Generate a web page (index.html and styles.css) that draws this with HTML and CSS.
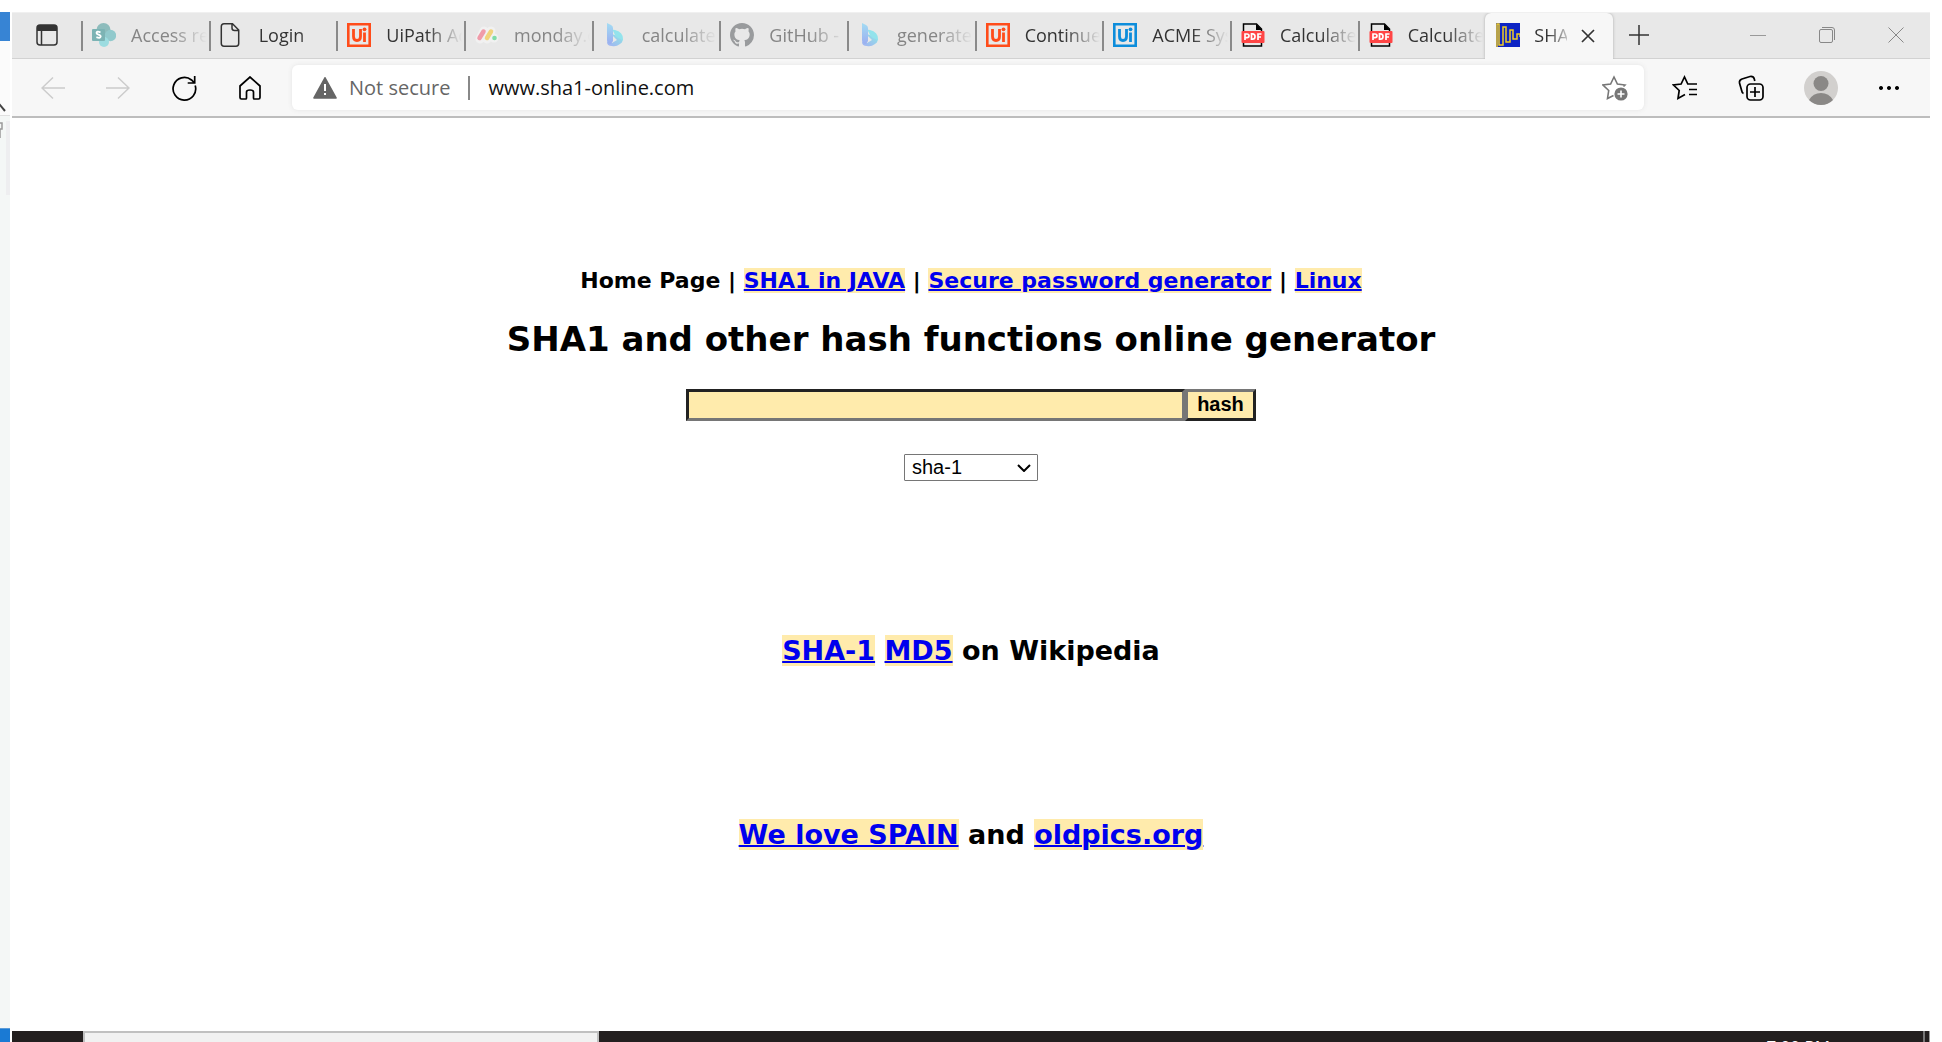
FILE: index.html
```html
<!DOCTYPE html>
<html lang="en">
<head>
<meta charset="utf-8">
<title>SHA1 and other hash functions online generator</title>
<link rel="stylesheet" href="styles.css">
</head>
<body>
<svg class="defs" aria-hidden="true">
  <symbol id="bing" viewBox="0 0 24 24">
    <defs><linearGradient id="bg1" x1="0" y1="0" x2="0" y2="1"><stop offset="0" stop-color="#a3dcf3"/><stop offset="1" stop-color="#9aaef0"/></linearGradient>
    <linearGradient id="bg2" x1="1" y1="0" x2="0" y2="1"><stop offset="0" stop-color="#8fe6e6"/><stop offset="1" stop-color="#a3b0f2"/></linearGradient></defs>
    <path d="M9 12q1-1 3 0l5 2q5 4 0 7-4 3-8 2-5 0-5-4l5 1 5-3z" fill="url(#bg2)"/>
    <path d="M10 8q-1-2 2-1 8 2 8 9v2q-1-2-5-3-2-1-3-3z" fill="#93e3ec"/>
    <path d="M4 0l4 2q2 1 2 3v13l-2 3q-4 0-4-4z" fill="url(#bg1)"/>
  </symbol>
  <symbol id="uipath" viewBox="0 0 24 24">
    <path d="M1.300 1.300h21.400v21.400H1.300z" fill="none" stroke="currentColor" stroke-width="2.600"/>
    <path d="M6.500 6v7.500q0 4 3.500 4t3.500-4V6M17.500 9.500V19" fill="none" stroke="currentColor" stroke-width="2.800"/>
    <circle cx="17.500" cy="6.300" r="1.900" fill="currentColor"/>
  </symbol>
  <symbol id="pdf" viewBox="0 0 24 24">
    <path d="M2.500 8V1h13l5 5v2M2.500 20v3h18v-3" fill="#e8e8e8" stroke="#000" stroke-width="1.500"/>
    <path d="M15 1l6 6h-6z" fill="#000"/>
    <rect x=".5" y="8" width="23" height="12" rx="1" fill="#ff4545"/>
    <path d="M4 17v-6h2q2 0 2 1.800t-2 1.800H4M10.500 10.800v5.400h1q2.500 0 2.500-2.700t-2.500-2.700zM17 17v-6h3.500M17 14h3" fill="none" stroke="#fff" stroke-width="1.700"/>
  </symbol>
</svg>
<div class="desktop">
  <aside class="behind" aria-hidden="true">
    <div class="behind-title"></div>
    <div class="behind-tools"><svg width="10" height="75" viewBox="0 0 10 75"><path d="M-4 69L0 64l5 6" fill="none" stroke="#444" stroke-width="2"/></svg></div>
    <div class="behind-page"><svg width="10" height="80" viewBox="0 0 10 80"><path d="M6 5h4v74H6z" fill="#eeeef0"/><path d="M-3 7h5v6H0v9" fill="none" stroke="#999" stroke-width="1.500"/></svg></div>
    <div class="behind-task"></div>
  </aside>
  <div class="window">
    <header class="tabstrip">
      <button class="tab-menu" aria-label="Tab actions menu"><svg width="22" height="22" viewBox="0 0 22 22"><rect x="1" y="1" width="20" height="20" rx="3" fill="none" stroke="#333" stroke-width="1.500"/><path d="M1 7V4q0-3 3-3h14q3 0 3 3v3z" fill="#333"/><path d="M5.500 7v14" stroke="#333" stroke-width="1.500"/></svg></button>
      <nav class="tabs" aria-label="Tabs">
        <div class="tab dim"><svg class="fav" viewBox="0 0 24 24"><circle cx="11.500" cy="7" r="7" fill="#8dbcbc"/><circle cx="18.500" cy="12.500" r="5.700" fill="#91c9cc"/><circle cx="12" cy="19" r="5" fill="#9cdce0"/><rect y="6" width="13" height="12" rx="1" fill="#7cb3b4"/><path d="M8.500 9.300q-4-1.500-4 .8 0 1 2 1.500 2.300.6 2.200 2-.4 2-4.300.6" fill="none" stroke="#fff" stroke-width="1.800"/></svg><span>Access re</span></div>
        <div class="tab"><svg class="fav" viewBox="0 0 24 24"><path d="M4 .8h8.500l6.200 6.200v13.500q0 2.700-2.700 2.700H4q-2.700 0-2.700-2.700v-17Q1.300.8 4 .8zM12 1v4q0 2.500 2.500 2.500h4" fill="none" stroke="#333" stroke-width="1.500"/></svg><span>Login</span></div>
        <div class="tab"><svg class="fav orange"><use href="#uipath"/></svg><span>UiPath Ac</span></div>
        <div class="tab dim"><svg class="fav" viewBox="0 0 24 24"><path d="M5 16l4-8M12 16l4-8M19 15v0" stroke="#f1f1f1" stroke-width="9" stroke-linecap="round"/><path d="M4.500 15l4-6.500" stroke="#f09ba9" stroke-width="4.500" stroke-linecap="round"/><path d="M12 15l4-6.500" stroke="#f1d37c" stroke-width="4.500" stroke-linecap="round"/><circle cx="19.500" cy="15" r="2.300" fill="#80dca7"/></svg><span>monday.c</span></div>
        <div class="tab dim"><svg class="fav"><use href="#bing"/></svg><span>calculate</span></div>
        <div class="tab dim"><svg class="fav" viewBox="0 0 16 16"><path fill="#999b9d" d="M8 0C3.580 0 0 3.580 0 8c0 3.540 2.290 6.530 5.470 7.590.4.070.55-.17.55-.38 0-.19-.01-.82-.01-1.490-2.010.37-2.530-.49-2.690-.94-.09-.23-.48-.94-.82-1.130-.28-.15-.68-.52-.01-.53.63-.01 1.080.58 1.230.82.72 1.210 1.870.87 2.330.66.07-.52.28-.87.51-1.070-1.780-.2-3.640-.89-3.640-3.950 0-.87.31-1.590.82-2.150-.08-.2-.36-1.020.08-2.120 0 0 .67-.21 2.200.82a7.600 7.600 0 0 1 4 0c1.530-1.040 2.200-.82 2.200-.82.44 1.100.16 1.920.08 2.120.51.56.82 1.270.82 2.150 0 3.070-1.870 3.750-3.650 3.950.29.25.54.73.54 1.480 0 1.070-.01 1.930-.01 2.200 0 .21.15.46.55.38A8.010 8.010 0 0 0 16 8c0-4.420-3.580-8-8-8z"/></svg><span>GitHub -</span></div>
        <div class="tab dim"><svg class="fav"><use href="#bing"/></svg><span>generate</span></div>
        <div class="tab"><svg class="fav orange"><use href="#uipath"/></svg><span>Continue</span></div>
        <div class="tab"><svg class="fav blue"><use href="#uipath"/></svg><span>ACME Sys</span></div>
        <div class="tab"><svg class="fav"><use href="#pdf"/></svg><span>Calculate</span></div>
        <div class="tab"><svg class="fav"><use href="#pdf"/></svg><span>Calculate</span></div>
        <div class="tab active"><svg class="fav" viewBox="0 0 24 24"><path fill="#0d24c4" d="M0 0h24v24H0z"/><path d="M1 24V1h2v21h4V4h3v15h4V7h3v9h4v-5h3v3" fill="none" stroke="#f1cd24" stroke-width="1.500"/></svg><span>SHA</span><button class="close" aria-label="Close tab"><svg width="14" height="14" viewBox="0 0 14 14"><path d="M1 1l12 12M13 1L1 13" stroke="#333" stroke-width="1.700"/></svg></button></div>
      </nav>
      <div class="strip-end">
        <button aria-label="New tab"><svg width="22" height="22" viewBox="0 0 22 22"><path d="M11 1v20M1 11h20" stroke="#333" stroke-width="1.500"/></svg></button>
        <div class="win-buttons">
          <button aria-label="Minimize"><svg width="16" height="16" viewBox="0 0 16 16"><path d="M0 8.500h16" stroke="#999"/></svg></button>
          <button aria-label="Restore"><svg width="16" height="16" viewBox="0 0 16 16"><rect x=".5" y="2.500" width="13" height="13" rx="1.500" fill="none" stroke="#888"/><path d="M3 .5h10q2.500 0 2.500 2.500v10" fill="none" stroke="#888"/></svg></button>
          <button aria-label="Close"><svg width="16" height="16" viewBox="0 0 16 16"><path d="M.5.5l15 15M15.500.5l-15 15" stroke="#888"/></svg></button>
        </div>
      </div>
    </header>
    <div class="toolbar">
      <div class="nav-buttons">
        <button aria-label="Back"><svg width="24" height="24" viewBox="0 0 24 24"><path d="M12 1.500L1 12l11 10.500M1 12h23" fill="none" stroke="#ccc" stroke-width="1.500"/></svg></button>
        <button aria-label="Forward"><svg width="24" height="24" viewBox="0 0 24 24"><path d="M12 1.500L23 12 12 22.500M0 12h23" fill="none" stroke="#ccc" stroke-width="1.500"/></svg></button>
        <button aria-label="Refresh"><svg width="26" height="26" viewBox="0 0 26 26"><path d="M24.200 10.500A11.300 11.300 0 1 1 20.500 5l3 2.800M23.700 1v7h-7" fill="none" stroke="#000" stroke-width="1.700"/></svg></button>
        <button aria-label="Home"><svg width="24" height="24" viewBox="0 0 24 24"><path d="M2 10L12 1l10 9v11.500q0 1.500-1.500 1.500h-4.200q-.8 0-.8-1v-6q0-2-3.500-2t-3.500 2v6q0 1-.8 1H3.500Q2 23 2 21.500z" fill="none" stroke="#000" stroke-width="1.700"/></svg></button>
      </div>
      <div class="address">
        <svg width="24" height="22" viewBox="0 0 24 22"><path d="M12 .8L23 21H1z" fill="#666" stroke="#666" stroke-width="1.600" stroke-linejoin="round"/><path d="M12 7v7M12 16v2" stroke="#fff" stroke-width="2"/></svg>
        <span class="secure">Not secure</span>
        <input class="url" type="text" aria-label="Address" value="www.sha1-online.com">
        <button aria-label="Add to favorites"><svg width="26" height="26" viewBox="0 0 26 26"><path d="M11.500 20.500L5.500 23.500l1.200-8L1 10l7.600-1L12 2l3.400 7 7.600 1-1.500 1.500" fill="none" stroke="#767676" stroke-width="1.600"/><circle cx="19" cy="19" r="6.600" fill="#767676"/><path d="M19 15.500v7M15.500 19h7" stroke="#fff" stroke-width="1.600"/></svg></button>
      </div>
      <div class="tools">
        <button aria-label="Favorites"><svg width="26" height="26" viewBox="0 0 26 26"><path d="M13 19.500L6 23.500l1.200-8L1.500 10l7.600-1L12.500 2l3.300 7H25M17 14.500h8M17 19.500h8" fill="none" stroke="#000" stroke-width="1.700"/></svg></button>
        <button aria-label="Collections"><svg width="26" height="26" viewBox="0 0 26 26"><rect x="9" y="9" width="16" height="16" rx="3.500" fill="none" stroke="#000" stroke-width="1.700"/><path d="M17 12v10M12 17h10M5.500 18.500Q4 18 3.500 15L1.500 8Q1 5 4 4l8-2.500q3.500-.5 4.300 2.500l.5 2" fill="none" stroke="#000" stroke-width="1.700"/></svg></button>
        <button aria-label="Profile"><svg width="34" height="34" viewBox="0 0 34 34"><circle cx="17" cy="17" r="17" fill="#d2d0ce"/><circle cx="17" cy="12.500" r="7.500" fill="#8a8886"/><path d="M5 29q4-7 12-7t12 7q-5 5-12 5T5 29z" fill="#8a8886"/></svg></button>
        <button aria-label="Settings and more"><svg width="22" height="6" viewBox="0 0 22 6"><path d="M3 1a2 2 0 1 0 .01 0zM11 1a2 2 0 1 0 .01 0zM19 1a2 2 0 1 0 .01 0z"/></svg></button>
      </div>
    </div>
    <main class="page">
      <p class="links">Home Page | <a href="#java">SHA1 in JAVA</a> | <a href="#password">Secure password generator</a> | <a href="#linux">Linux</a></p>
      <h1>SHA1 and other hash functions online generator</h1>
      <form>
        <div class="entry"><input type="text" aria-label="Text to hash"><button type="button">hash</button></div>
        <div class="pick"><select aria-label="Hash function"><option>sha-1</option><option>md5</option></select><svg width="14" height="8" viewBox="0 0 14 8"><path d="M1 1l6 6 6-6" fill="none" stroke="#000" stroke-width="2"/></svg></div>
      </form>
      <p class="wiki"><a href="#sha1">SHA-1</a> <a href="#md5">MD5</a> on Wikipedia</p>
      <p class="love"><a href="#spain">We love SPAIN</a> and <a href="#oldpics">oldpics.org</a></p>
    </main>
    <footer class="taskbar"><div class="search"></div><time>7:00 PM</time><div class="peek"></div></footer>
  </div>
</div>
</body>
</html>
```
FILE: styles.css
```css
* { box-sizing: border-box; }
body { margin: 0; background: #fff; font-family: "Open Sans", "Noto Sans", sans-serif; }
button { border: 0; padding: 0; background: none; display: flex; align-items: center; justify-content: center; }
svg { display: block; flex: none; }
.defs { position: absolute; width: 0; height: 0; }

.desktop { display: flex; gap: 2px; height: 100vh; padding: 12px 12px 0 0; overflow: hidden; }
.behind { width: 10px; display: flex; flex-direction: column; overflow: hidden; }
.behind-title { height: 29px; background: #3784d4; }
.behind-tools { height: 75px; background: #fbfbfb; border-bottom: 1px solid #e0e0e0; }
.behind-page { flex: 1; background: #f4f7f6; }
.behind-task { height: 14px; background: #1a7ad4; border-top: 1px solid #5a9bd8; }
.window { flex: 1; min-width: 0; display: flex; flex-direction: column; }

/* Tab strip */
.tabstrip { display: flex; height: 47px; background: #e8e8e8; border-top: 1px solid #f0f0f0; border-bottom: 1px solid #d2d2d2; }
.tab-menu { width: 69px; padding-bottom: 2px; }
.tabs { flex: 1; min-width: 0; display: grid; grid-template-columns: repeat(12, minmax(0, 1fr)); }
.tab { display: flex; align-items: center; height: 46px; gap: 15px; padding: 0 2px 2px 11px; font-size: 18px; color: #333; background: linear-gradient(#8a8a8a, #8a8a8a) 0 8px / 2px 30px no-repeat; }
.tab span { flex: 1; min-width: 0; overflow: hidden; white-space: nowrap; -webkit-mask-image: linear-gradient(to left, transparent, #000 36px); mask-image: linear-gradient(to left, transparent, #000 36px); }
.tab.dim { color: #858585; }
.tab.active { background: #f7f7f7; border-radius: 6px 6px 0 0; box-shadow: 0 0 3px #aaa; clip-path: inset(0 -4px 0 -4px); padding: 0 18px 2px 11px; gap: 14px; }
.tab.active span { -webkit-mask-image: linear-gradient(to left, #0004, #000 20px); mask-image: linear-gradient(to left, #0004, #000 20px); }
.close { padding-top: 2px; }
.fav { width: 24px; height: 24px; }
.orange { color: #ff4c1a; }
.blue { color: #0d8ddb; }
.strip-end { width: 317px; display: flex; justify-content: space-between; padding: 0 26px 2px 15px; }
.win-buttons { display: flex; gap: 53px; }

/* Toolbar */
.toolbar { display: flex; align-items: center; height: 59px; background: #f7f7f7; border-bottom: 2px solid #bdbdbd; }
.nav-buttons { width: 280px; display: flex; gap: 41px; padding-left: 29px; }
.address { flex: 1; min-width: 0; height: 45px; display: flex; align-items: center; background: #fff; border-radius: 6px; box-shadow: 0 0 5px #e4e4e4; padding: 0 16px 0 21px; font-size: 20px; }
.secure { color: #666; padding: 0 18px 0 12px; line-height: 24px; border-right: 2px solid #888; white-space: nowrap; }
.url { flex: 1; min-width: 0; border: 0; outline: 0; padding: 0 0 0 18px; font: inherit; color: #111; background: none; }
.tools { width: 286px; display: flex; align-items: center; gap: 40px; padding-left: 28px; }

/* Page */
.page { flex: 1; min-height: 0; background: #fff; text-align: center; font-family: Verdana, "DejaVu Sans", sans-serif; font-weight: bold; color: #000; padding-top: 148px; }
.page a { color: #00e; background: #ffebac; text-decoration-thickness: 2px; }
.page p, .page h1 { margin: 0; }
.links { font-size: 22px; line-height: 30px; }
.page h1 { font-size: 34px; line-height: 40px; margin-top: 23px; }
.entry { display: flex; justify-content: center; margin-top: 30px; }
.entry input, .entry button { height: 32px; border: 3px solid; background: #ffebac; border-radius: 0; font: bold 20px "Liberation Sans", Arial, sans-serif; color: #000; }
.entry input { width: 499px; outline: 0; border-color: #222 #767676 #767676 #222; }
.entry button { width: 71px; padding-bottom: 2px; border-color: #767676 #222 #222 #767676; }
.pick { display: grid; width: 134px; margin: 33px auto 0; align-items: center; }
.pick select { grid-area: 1 / 1; height: 27px; appearance: none; border: 1px solid #767676; border-radius: 1px; background: #fff; padding: 0 7px 1px; font: 20px "Liberation Sans", Arial, sans-serif; color: #000; }
.pick svg { grid-area: 1 / 1; justify-self: end; margin-right: 7px; pointer-events: none; }
.wiki, .love { font-size: 27px; line-height: 34px; }
.wiki { padding-top: 153px; }
.love { padding-top: 150px; }

/* Taskbar */
.taskbar { height: 11px; display: flex; background: #231f1f; padding-left: 71px; overflow: hidden; }
.search { width: 516px; border: 2px solid #c0c0c0; border-bottom: 0; background: #f1f1f1; }
.taskbar time { margin-left: auto; color: #fff; font-size: 17px; line-height: 32px; }
.peek { width: 7px; margin-left: 93px; border-left: 2px solid #777; border-right: 1px solid #999; }
```
